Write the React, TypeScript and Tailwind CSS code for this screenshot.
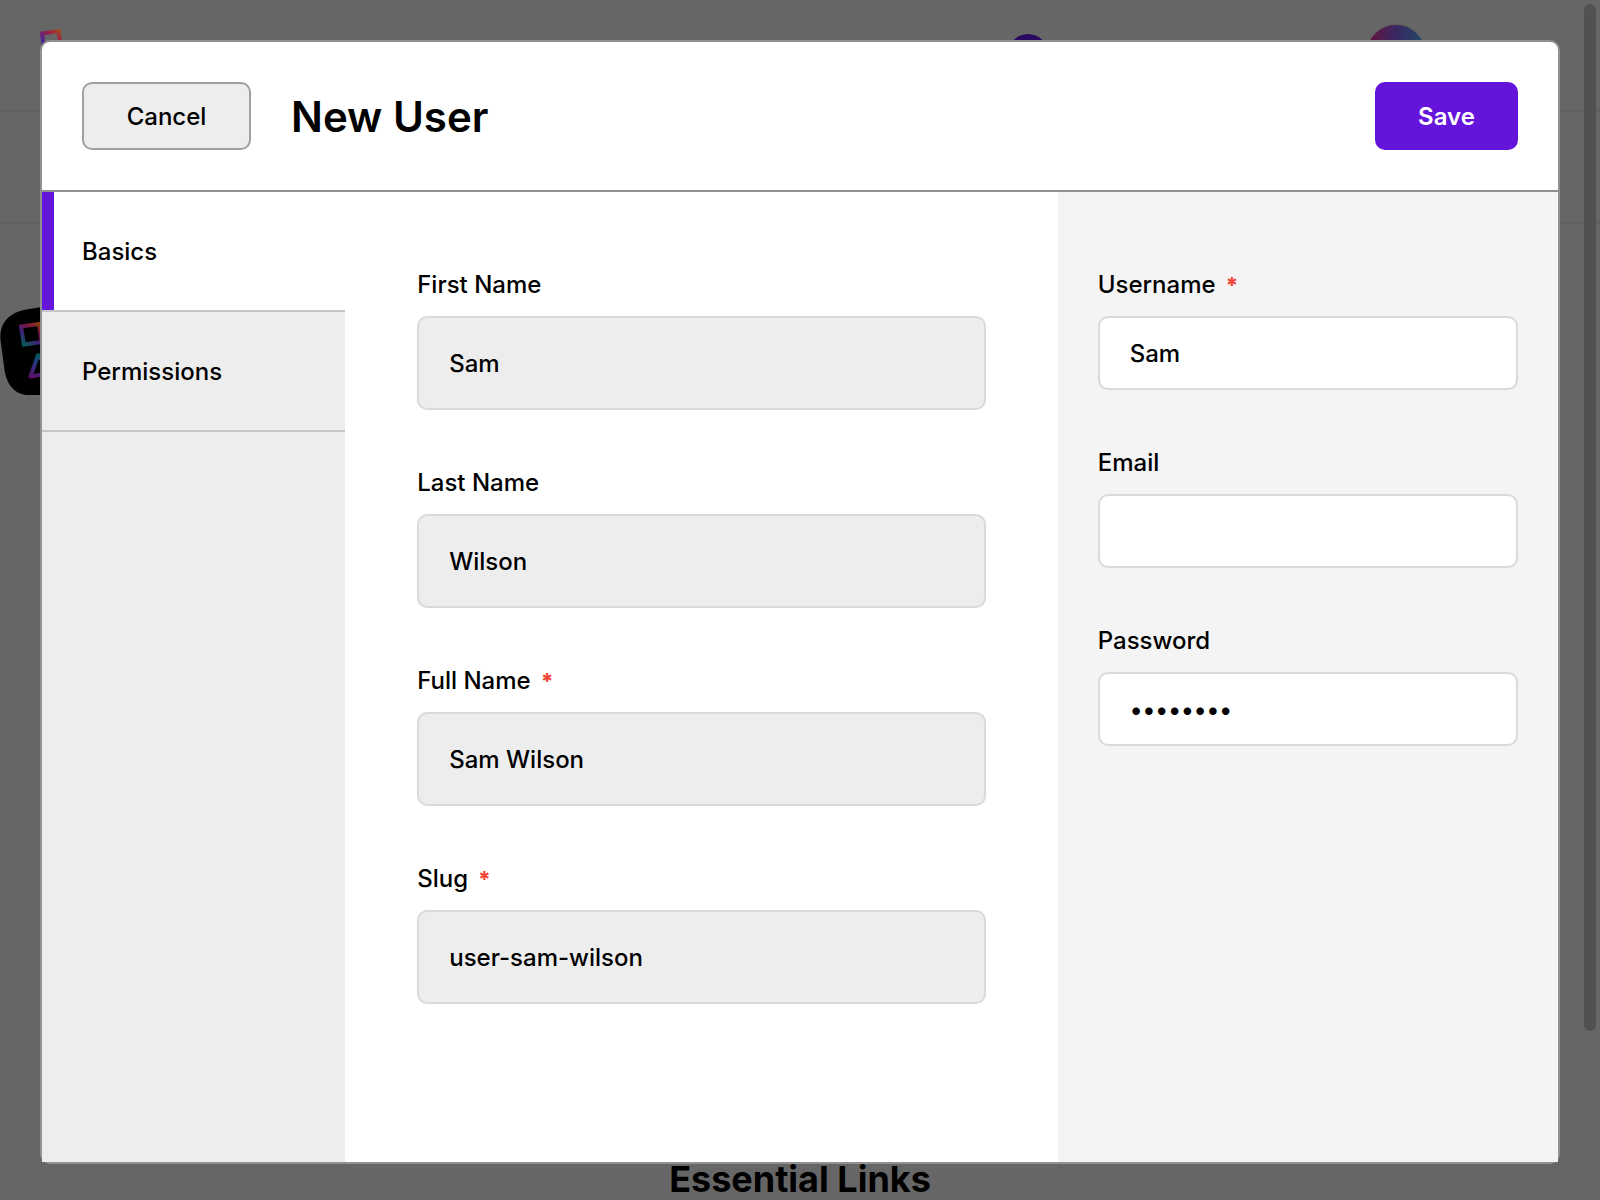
import { useId, useState } from 'react';

type FieldProps = {
  label: string;
  initial?: string;
  type?: string;
  required?: boolean;
  roomy?: boolean;
};

function Field({ label, initial = '', type = 'text', required, roomy }: FieldProps) {
  const id = useId();
  const [value, setValue] = useState(initial);
  return (
    <div className="flex flex-col gap-[18px]">
      <label htmlFor={id} className="flex gap-2.5 leading-[26px]">
        {label}
        {required && <span className="text-[22px] leading-[26px] font-extrabold text-[#f44336]">*</span>}
      </label>
      <input
        id={id}
        type={type}
        required={required}
        value={value}
        onChange={(e) => setValue(e.target.value)}
        className={
          roomy
            ? 'w-full rounded-[10px] border-2 border-[#dadada] bg-[#ededed] px-[30px] pt-[31px] pb-[29px] leading-[30px] outline-none'
            : 'w-full rounded-[10px] border-2 border-[#dadada] bg-white px-[30px] pt-[21px] pb-[19px] leading-[30px] outline-none'
        }
      />
    </div>
  );
}

function BrandMark() {
  return (
    <svg viewBox="0 0 32 40" fill="none" className="h-10 w-8" aria-hidden="true">
      <defs>
        <linearGradient id="brand" x1="20" y1="4" x2="4" y2="24" gradientUnits="userSpaceOnUse">
          <stop offset="0" stopColor="#a4560c" />
          <stop offset="0.4" stopColor="#9a2048" />
          <stop offset="0.75" stopColor="#5a2290" />
          <stop offset="1" stopColor="#2a3090" />
        </linearGradient>
      </defs>
      <path d="M2 9.500 L18.500 7 L21 24 L4.500 26.500 Z" stroke="url(#brand)" strokeWidth="4" />
    </svg>
  );
}

function AppBadge() {
  return (
    <svg viewBox="0 0 100 100" className="size-25" fill="none" aria-hidden="true">
      <defs>
        <linearGradient id="box" x1="41" y1="22" x2="24" y2="46" gradientUnits="userSpaceOnUse">
          <stop offset="0" stopColor="#8a4800" />
          <stop offset="0.35" stopColor="#7a1440" />
          <stop offset="0.65" stopColor="#3c2478" />
          <stop offset="1" stopColor="#006058" />
        </linearGradient>
        <linearGradient id="tri" x1="38" y1="53" x2="32" y2="78" gradientUnits="userSpaceOnUse">
          <stop offset="0" stopColor="#006058" />
          <stop offset="0.5" stopColor="#302c80" />
          <stop offset="1" stopColor="#5c1060" />
        </linearGradient>
      </defs>
      <path
        d="M80 1 L26 9.500 C8 13 -1 24 0.500 40 L4.500 70 C7 86 16 95 28 95 H80 Z"
        fill="#000"
      />
      <path d="M21 26.500 L39 24 L41.500 42 L24 44.500 Z" stroke="url(#box)" strokeWidth="4" />
      <path
        d="M38 55 L30.500 76.500 L52 73 Z"
        stroke="url(#tri)"
        strokeWidth="4"
        strokeLinejoin="round"
      />
    </svg>
  );
}

function Backdrop() {
  return (
    <div className="absolute inset-0 flex flex-col bg-[#666666]" aria-hidden="true">
      <div className="flex h-28 items-start border-b-2 border-[#606060] pt-6 pr-[174px] pl-10">
        <BrandMark />
        <div className="mt-2.5 mr-[318px] ml-auto size-10 rounded-full bg-[#290961]" />
        <div className="size-15 rounded-full border border-[#5c5c5c] bg-linear-to-r from-[#66003c] via-[#382662] to-[#0f4a66]" />
      </div>
      <div className="mb-19 h-28 border-b-2 border-[#606060]" />
      <AppBadge />
      <h2 className="mt-auto text-center text-4xl leading-[42px] font-bold">Essential Links</h2>
    </div>
  );
}

const tabs = ['Basics', 'Permissions'];

export default function App() {
  const [active, setActive] = useState('Basics');
  return (
    <div className="relative flex min-h-screen font-['Inter',sans-serif] text-2xl font-medium text-black">
      <Backdrop />
      <div className="absolute top-1 right-1 h-[1027px] w-3 rounded-full bg-[#515151]" />
      <form
        role="dialog"
        aria-labelledby="title"
        onSubmit={(e) => e.preventDefault()}
        className="relative mx-10 mt-10 mb-9 flex flex-1 flex-col rounded-[10px] border-2 border-[#919191] bg-white"
      >
        <header className="flex items-center gap-10 border-b-2 border-[#919191] p-10">
          <button
            type="button"
            className="w-[169px] rounded-[10px] border-2 border-[#a0a0a0] bg-[#ededed] pt-[17px] pb-[15px] leading-8"
          >
            Cancel
          </button>
          <h1 id="title" className="pt-0.5 text-[42px] leading-[60px] font-semibold">
            New User
          </h1>
          <button
            type="submit"
            className="ml-auto w-[143px] rounded-[10px] border-2 border-[#6414db] bg-[#6414db] pt-[17px] pb-[15px] leading-8 font-semibold text-white"
          >
            Save
          </button>
        </header>
        <div className="flex flex-1">
          <nav className="flex w-1/5 flex-col bg-[#ededed]">
            {tabs.map((tab) => (
              <button
                key={tab}
                type="button"
                onClick={() => setActive(tab)}
                className={
                  tab === active
                    ? 'border-b-2 border-[#c6c6c6] bg-white text-left leading-[38px]'
                    : 'border-b-2 border-[#c6c6c6] text-left leading-[38px]'
                }
              >
                <span
                  className={
                    tab === active
                      ? 'block border-l-12 border-[#6414db] pt-[41px] pb-[39px] pl-7'
                      : 'block border-l-12 border-transparent pt-[41px] pb-[39px] pl-7'
                  }
                >
                  {tab}
                </span>
              </button>
            ))}
          </nav>
          <div className="flex flex-1 flex-col gap-[60px] px-18 pt-20">
            <Field label="First Name" initial="Sam" roomy />
            <Field label="Last Name" initial="Wilson" roomy />
            <Field label="Full Name" initial="Sam Wilson" required roomy />
            <Field label="Slug" initial="user-sam-wilson" required roomy />
          </div>
          <aside className="flex w-[33%] flex-col gap-[60px] bg-[#f4f4f4] px-10 pt-20">
            <Field label="Username" initial="Sam" required />
            <Field label="Email" type="email" />
            <Field label="Password" type="password" initial="password" />
          </aside>
        </div>
      </form>
    </div>
  );
}
